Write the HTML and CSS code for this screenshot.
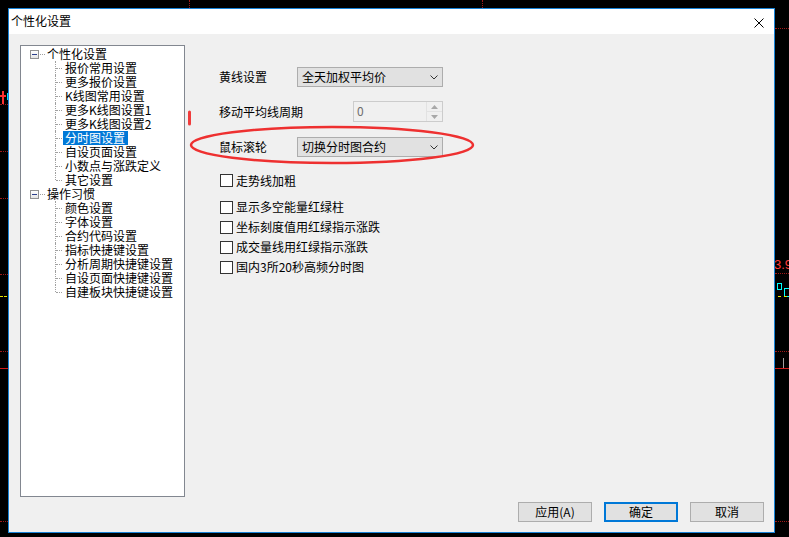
FILE: index.html
```html
<!DOCTYPE html>
<html lang="zh-CN">
<head>
    <meta charset="UTF-8">
    <meta name="viewport" content="width=device-width, initial-scale=1.0">
    <title>个性化设置</title>
    <link rel="stylesheet" href="styles.css">
</head>
<body>
    <div class="desktop">
        <!-- chart behind the dialog -->
        <div class="chart">
            <span class="dot-v" style="left: 189px;"></span>
            <span class="dot-v" style="left: 482px;"></span>

            <span class="dot-h left" style="top: 104px;"></span>
            <span class="dot-h left" style="top: 151px;"></span>
            <span class="dot-h left" style="top: 198px;"></span>
            <span class="dot-h left" style="top: 274px;"></span>
            <span class="dot-h left" style="top: 351px;"></span>
            <span class="dot-h left" style="top: 521px;"></span>
            <span class="solid-h left" style="top: 368px;"></span>
            <span class="yellow-dash" style="left: 0; top: 296px;"></span>
            <span class="yellow-dash" style="left: 4px; top: 296px;"></span>
            <span class="cross-v"></span>
            <span class="cross-h"></span>
            <span class="cyan-tick"></span>

            <span class="dot-h right" style="top: 28px;"></span>
            <span class="dot-h right" style="top: 273px;"></span>
            <span class="dot-h right" style="top: 351px;"></span>
            <span class="dot-h right" style="top: 521px;"></span>
            <span class="solid-h right" style="top: 368px;"></span>
            <span class="price">3.9</span>
            <span class="candle small"></span>
            <span class="candle big"></span>
            <span class="yellow-dash" style="left: 778px; top: 296px;"></span>
            <span class="yellow-dash" style="left: 784px; top: 296px;"></span>
            <span class="gray-tick"></span>
        </div>

        <div class="dialog">
            <div class="titlebar">
                <span class="title">个性化设置</span>
                <svg class="close" width="10" height="10" viewBox="0 0 10 10">
                    <path d="M0.5 0.5 L9.5 9.5 M9.5 0.5 L0.5 9.5" stroke="#000" stroke-width="1" fill="none"/>
                </svg>
            </div>

            <div class="dialog-body">
                <div class="main">
                    <div class="tree">
                        <div class="root">
                            <span class="expander"><span class="minus"></span></span>
                            <span class="stub"></span>
                            <span class="label">个性化设置</span>
                        </div>
                        <ul class="children">
                            <li><span class="label">报价常用设置</span></li>
                            <li><span class="label">更多报价设置</span></li>
                            <li><span class="label">K线图常用设置</span></li>
                            <li><span class="label">更多K线图设置1</span></li>
                            <li><span class="label">更多K线图设置2</span></li>
                            <li><span class="label selected">分时图设置</span></li>
                            <li><span class="label">自设页面设置</span></li>
                            <li><span class="label">小数点与涨跌定义</span></li>
                            <li><span class="label">其它设置</span></li>
                        </ul>
                        <div class="root">
                            <span class="expander"><span class="minus"></span></span>
                            <span class="stub"></span>
                            <span class="label">操作习惯</span>
                        </div>
                        <ul class="children">
                            <li><span class="label">颜色设置</span></li>
                            <li><span class="label">字体设置</span></li>
                            <li><span class="label">合约代码设置</span></li>
                            <li><span class="label">指标快捷键设置</span></li>
                            <li><span class="label">分析周期快捷键设置</span></li>
                            <li><span class="label">自设页面快捷键设置</span></li>
                            <li><span class="label">自建板块快捷键设置</span></li>
                        </ul>
                    </div>

                    <div class="settings">
                        <div class="field first">
                            <span class="field-label">黄线设置</span>
                            <div class="combo">
                                <span>全天加权平均价</span>
                                <svg width="8" height="5" viewBox="0 0 8 5"><path d="M0.5 0.5 L4 4 L7.5 0.5" stroke="#333" fill="none"/></svg>
                            </div>
                        </div>
                        <div class="field second">
                            <span class="field-label">移动平均线周期</span>
                            <div class="spin">
                                <span class="spin-value">0</span>
                                <div class="spin-buttons">
                                    <span class="spin-btn"><svg width="7" height="4" viewBox="0 0 7 4"><path d="M0 4 L3.5 0 L7 4 Z" fill="#a8a8a8"/></svg></span>
                                    <span class="spin-btn"><svg width="7" height="4" viewBox="0 0 7 4"><path d="M0 0 L3.5 4 L7 0 Z" fill="#a8a8a8"/></svg></span>
                                </div>
                            </div>
                        </div>
                        <div class="field third">
                            <span class="field-label">鼠标滚轮</span>
                            <div class="combo">
                                <span>切换分时图合约</span>
                                <svg width="8" height="5" viewBox="0 0 8 5"><path d="M0.5 0.5 L4 4 L7.5 0.5" stroke="#333" fill="none"/></svg>
                            </div>
                        </div>

                        <div class="checks">
                            <label class="check wide"><span class="box"></span>走势线加粗</label>
                            <label class="check"><span class="box"></span>显示多空能量红绿柱</label>
                            <label class="check"><span class="box"></span>坐标刻度值用红绿指示涨跌</label>
                            <label class="check"><span class="box"></span>成交量线用红绿指示涨跌</label>
                            <label class="check"><span class="box"></span>国内3所20秒高频分时图</label>
                        </div>
                    </div>
                </div>

                <div class="buttons">
                    <button class="btn">应用(A)</button>
                    <button class="btn default">确定</button>
                    <button class="btn">取消</button>
                </div>
            </div>
        </div>

        <!-- red markup drawn on top of the screenshot -->
        <svg class="markup" width="789" height="537" viewBox="0 0 789 537">
            <line x1="189.5" y1="112" x2="189.5" y2="124" stroke="#f03c3c" stroke-width="3" stroke-linecap="round"/>
            <ellipse cx="332" cy="145" rx="141" ry="18" fill="none" stroke="#ee3030" stroke-width="2.5"/>
        </svg>
    </div>
</body>
</html>
```

FILE: styles.css
```css
* {
    margin: 0;
    padding: 0;
    box-sizing: border-box;
}

body {
    width: 789px;
    height: 537px;
    overflow: hidden;
    background-color: #000;
    font-family: "Noto Sans CJK SC", "Noto Sans", sans-serif;
    font-size: 12px;
    color: #000;
}

.desktop {
    position: relative;
    width: 789px;
    height: 537px;
    background-color: #000;
}

/* chart pieces peeking round the dialog */
.chart span {
    position: absolute;
    display: block;
}

.dot-v {
    top: 0;
    width: 1px;
    height: 8px;
    border-left: 1px dotted #a01818;
}

.dot-h {
    height: 1px;
    border-top: 1px dotted #a01818;
}

.dot-h.left, .solid-h.left {
    left: 0;
    width: 8px;
}

.dot-h.right, .solid-h.right {
    left: 775px;
    width: 14px;
}

.solid-h {
    height: 1px;
    background-color: #d01818;
}

.yellow-dash {
    width: 3px;
    height: 1px;
    background-color: #e8e800;
}

.cross-v {
    left: 2px;
    top: 91px;
    width: 2px;
    height: 13px;
    background-color: #ff3030;
}

.cross-h {
    left: 0;
    top: 95px;
    width: 6px;
    height: 2px;
    background-color: #ff3030;
}

.cyan-tick {
    left: 7px;
    top: 93px;
    width: 1px;
    height: 7px;
    background-color: #00e0ff;
}

.price {
    left: 774px;
    top: 257px;
    font-family: "Liberation Sans", sans-serif;
    font-size: 13px;
    line-height: 16px;
    color: #ff3c3c;
}

.candle {
    border: 1px solid #00ffff;
}

.candle.small {
    left: 777px;
    top: 283px;
    width: 5px;
    height: 7px;
}

.candle.big {
    left: 784px;
    top: 288px;
    width: 6px;
    height: 9px;
}

.gray-tick {
    left: 783px;
    top: 358px;
    width: 1px;
    height: 10px;
    background-color: #a0a0a0;
}

/* dialog window */
.dialog {
    position: absolute;
    left: 8px;
    top: 8px;
    width: 767px;
    height: 525px;
    border: 1px solid #1883d7;
    background-color: #f0f0f0;
    display: flex;
    flex-direction: column;
}

.titlebar {
    height: 25px;
    background-color: #fff;
    display: flex;
    align-items: center;
    justify-content: space-between;
    padding: 0 10px 0 2px;
}

.title {
    line-height: 14px;
    margin-top: -2px;
}

.close {
    display: block;
    margin-top: 2px;
}

.dialog-body {
    flex: 1;
    display: flex;
    flex-direction: column;
    padding: 11px 10px 10px 11px;
}

.main {
    height: 452px;
    display: flex;
}

/* tree view */
.tree {
    width: 165px;
    height: 452px;
    background-color: #fff;
    border: 1px solid #828790;
    padding-top: 1px;
    line-height: 14px;
    white-space: nowrap;
}

.root {
    height: 14px;
    display: flex;
    align-items: center;
    padding-left: 9px;
}

.expander {
    width: 9px;
    height: 9px;
    border: 1px solid #919191;
    background: linear-gradient(#ffffff, #e4e4e4);
    display: flex;
    align-items: center;
    justify-content: center;
}

.minus {
    width: 5px;
    height: 1px;
    background-color: #2b3f8c;
}

.stub {
    width: 5px;
    height: 1px;
    margin-left: 1px;
    border-top: 1px dotted #a0a0a0;
}

.label {
    display: inline-block;
    padding: 0 2px;
    height: 14px;
    line-height: 14px;
}

.label.selected {
    background-color: #0078d7;
    color: #fff;
    padding: 0 3px 0 2px;
}

.children {
    list-style: none;
    margin-left: 34px;
}

.children li {
    position: relative;
    height: 14px;
    padding-left: 8px;
}

.children li::before {
    content: "";
    position: absolute;
    left: 0;
    top: 0;
    bottom: 0;
    border-left: 1px dotted #a0a0a0;
}

.children li:last-child::before {
    bottom: 7px;
}

.children li::after {
    content: "";
    position: absolute;
    left: 1px;
    top: 7px;
    width: 6px;
    border-top: 1px dotted #a0a0a0;
}

/* settings pane */
.settings {
    flex: 1;
    padding: 22px 0 0 34px;
}

.field {
    width: 224px;
    height: 20px;
    display: flex;
    align-items: center;
}

.field.first {
    margin-bottom: 14px;
}

.field.second {
    height: 21px;
    margin-bottom: 15px;
}

.field-label {
    width: 78px;
    flex: none;
    white-space: nowrap;
    line-height: 14px;
}

.combo {
    width: 146px;
    height: 20px;
    background-color: #e1e1e1;
    border: 1px solid #adadad;
    display: flex;
    align-items: center;
    justify-content: space-between;
    padding: 0 4px 0 4px;
    line-height: 14px;
}

.combo svg {
    display: block;
}

.spin {
    margin-left: auto;
    width: 90px;
    height: 21px;
    border: 1px solid #cccccc;
    display: flex;
}

.spin-value {
    flex: 1;
    padding-left: 3px;
    line-height: 17px;
    color: #6d6d6d;
}

.spin-buttons {
    width: 16px;
    display: flex;
    flex-direction: column;
    border-left: 1px solid #e2e2e2;
}

.spin-btn {
    flex: 1;
    display: flex;
    align-items: center;
    justify-content: center;
}

.spin-btn + .spin-btn {
    border-top: 1px solid #e2e2e2;
}

.spin-btn svg {
    display: block;
}

.checks {
    margin-top: 17px;
    margin-left: 1px;
}

.check {
    height: 20px;
    display: flex;
    align-items: center;
    line-height: 14px;
}

.check.wide {
    height: 13px;
    margin-bottom: 10px;
}

.box {
    width: 13px;
    height: 13px;
    border: 1px solid #333;
    background-color: #fff;
    margin-right: 3px;
}

/* bottom buttons */
.buttons {
    margin-top: 5px;
    display: flex;
    justify-content: flex-end;
    gap: 12px;
}

.btn {
    width: 74px;
    height: 20px;
    background-color: #e1e1e1;
    border: 1px solid #adadad;
    font-family: "Noto Sans CJK SC", "Noto Sans", sans-serif;
    font-size: 12px;
    line-height: 14px;
    color: #000;
}

.btn.default {
    border: 2px solid #0078d7;
}

.markup {
    position: absolute;
    left: 0;
    top: 0;
}
```
